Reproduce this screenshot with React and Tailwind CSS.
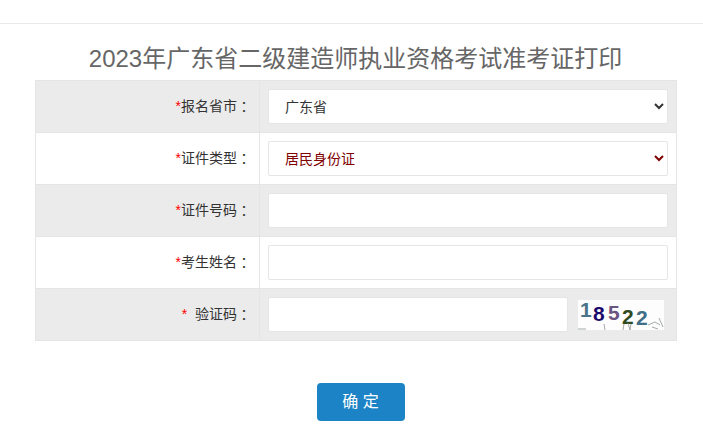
const FONT = "font-['Arial','Liberation_Sans','Noto_Sans_CJK_SC',sans-serif]";

function Row({ label, star = "*", shaded, children }) {
  return (
    <div className={`flex h-[52px] border-b border-[#e5e5e5] ${shaded ? "bg-[#ebebeb]" : "bg-white"}`}>
      <div className="flex w-[224px] items-center justify-end border-r border-[#e5e5e5] pr-[8px] text-[14px] text-[#333]">
        <span className="whitespace-pre text-[#f00]">{star}</span>
        <span>{label}</span>
        <span className="font-['Noto_Sans_CJK_TC',sans-serif]">：</span>
      </div>
      <div className="flex flex-1 items-center gap-[10px] pl-2 pr-2">{children}</div>
    </div>
  );
}

const field = "h-[35px] border border-[#e5e5e5] bg-white outline-none rounded-[2px]";

function Captcha() {
  return (
    <svg width="86" height="30" viewBox="0 0 86 30" className="block">
      <rect width="86" height="30" fill="#fdfdfd" />
      <g fontFamily="'Liberation Sans',sans-serif" fontWeight="700" fontSize="21">
        <text x="2" y="17" fill="#4a7488">1</text>
        <text x="15" y="21" fill="#1a0a6b">8</text>
        <text x="30" y="20" fill="#6a5480">5</text>
        <text x="44" y="24" fill="#2e4a1e">2</text>
        <text x="58" y="25" fill="#3f6e88">2</text>
      </g>
      <path d="M0 29h8M26 24l1 6M46 24l-1 6M50 23l2 7M53 24l-1 6M70 25l7-3 5 3M81 18l4 9M74 27l6 2" stroke="#8b9490" strokeWidth="0.8" fill="none" />
    </svg>
  );
}

export default function App() {
  return (
    <div className={`h-[432px] w-[703px] overflow-hidden bg-white ${FONT}`}>
      <div className="h-6 border-b border-[#e9e9e9]" />
      <h1 className="mt-[17px] h-[39px] pl-2 text-center text-[24px] leading-[36px] text-[#666]">
        2023年广东省二级建造师执业资格考试准考证打印
      </h1>
      <div className="ml-[35px] w-[642px] border border-b-0 border-[#e5e5e5]">
        <Row label="报名省市" shaded>
          <select className={`${field} w-full pl-3 text-[14px] text-[#333]`} defaultValue="广东省">
            <option>广东省</option>
          </select>
        </Row>
        <Row label="证件类型">
          <select className={`${field} w-full pl-3 text-[14px] text-[#800000]`} defaultValue="居民身份证">
            <option>居民身份证</option>
          </select>
        </Row>
        <Row label="证件号码" shaded>
          <input className={`${field} w-full`} />
        </Row>
        <Row label="考生姓名">
          <input className={`${field} w-full`} />
        </Row>
        <Row label="验证码" star={"* \u00a0"} shaded>
          <input className={`${field} w-[300px]`} />
          <Captcha />
        </Row>
      </div>
      <div className="mt-[42px] flex justify-center pl-[18px]">
        <button className="h-[38px] w-[88px] rounded-[4px] bg-[#1c84c6] text-[16px] text-white">确 定</button>
      </div>
    </div>
  );
}
